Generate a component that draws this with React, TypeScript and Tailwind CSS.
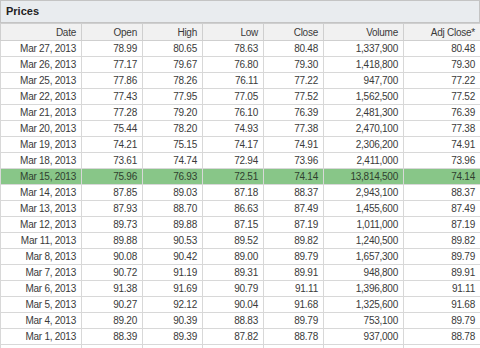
const rows: string[][] = [
  ["Mar 27, 2013", "78.99", "80.65", "78.63", "80.48", "1,337,900", "80.48"],
  ["Mar 26, 2013", "77.17", "79.67", "76.80", "79.30", "1,418,800", "79.30"],
  ["Mar 25, 2013", "77.86", "78.26", "76.11", "77.22", "947,700", "77.22"],
  ["Mar 22, 2013", "77.43", "77.95", "77.05", "77.52", "1,562,500", "77.52"],
  ["Mar 21, 2013", "77.28", "79.20", "76.10", "76.39", "2,481,300", "76.39"],
  ["Mar 20, 2013", "75.44", "78.20", "74.93", "77.38", "2,470,100", "77.38"],
  ["Mar 19, 2013", "74.21", "75.15", "74.17", "74.91", "2,306,200", "74.91"],
  ["Mar 18, 2013", "73.61", "74.74", "72.94", "73.96", "2,411,000", "73.96"],
  ["Mar 15, 2013", "75.96", "76.93", "72.51", "74.14", "13,814,500", "74.14"],
  ["Mar 14, 2013", "87.85", "89.03", "87.18", "88.37", "2,943,100", "88.37"],
  ["Mar 13, 2013", "87.93", "88.70", "86.63", "87.49", "1,455,600", "87.49"],
  ["Mar 12, 2013", "89.73", "89.88", "87.15", "87.19", "1,011,000", "87.19"],
  ["Mar 11, 2013", "89.88", "90.53", "89.52", "89.82", "1,240,500", "89.82"],
  ["Mar 8, 2013", "90.08", "90.42", "89.00", "89.79", "1,657,300", "89.79"],
  ["Mar 7, 2013", "90.72", "91.19", "89.31", "89.91", "948,800", "89.91"],
  ["Mar 6, 2013", "91.38", "91.69", "90.79", "91.11", "1,396,800", "91.11"],
  ["Mar 5, 2013", "90.27", "92.12", "90.04", "91.68", "1,325,600", "91.68"],
  ["Mar 4, 2013", "89.20", "90.39", "88.83", "89.79", "753,100", "89.79"],
  ["Mar 1, 2013", "88.39", "89.39", "87.82", "88.78", "937,000", "88.78"],
];

const headers = ["Date", "Open", "High", "Low", "Close", "Volume", "Adj Close*"];
const widths = ["w-[81px]", "w-[61px]", "w-[60px]", "w-[61px]", "w-[60px]", "w-[80px]", "w-[77px]"];

export default function App() {
  return (
    <div className="w-[480px] h-[348px] overflow-hidden bg-white font-['Liberation_Sans',Arial,sans-serif] text-[10px] tracking-[-0.25px] text-[#3a3a3a]">
      <div className="h-[23px] border border-[#c4c4c4] bg-[#e9ecef] px-[5px] flex items-center">
        <span className="font-bold text-[11px] tracking-normal text-[#222]">Prices</span>
      </div>
      <table className="w-[480px] table-fixed border-collapse">
        <thead>
          <tr className="h-[17px] bg-[#f1f1f1]">
            {headers.map((h, i) => (
              <th
                key={h}
                className={`${widths[i]} border border-[#cfcfcf] px-[5px] py-0 text-right font-normal leading-[15px]`}
              >
                {h}
              </th>
            ))}
          </tr>
        </thead>
        <tbody>
          {rows.map((r, ri) => {
            const hot = r[0] === "Mar 15, 2013";
            return (
              <tr key={ri} className={`h-[16px] ${hot ? "bg-[#88c688]" : "bg-white"}`}>
                {r.map((c, ci) => (
                  <td
                    key={ci}
                    className={`border border-[#d8d8d8] px-[5px] py-0 text-right leading-[15px] whitespace-nowrap ${
                      hot ? "text-[#2f3f2f]" : ""
                    }`}
                  >
                    {c}
                  </td>
                ))}
              </tr>
            );
          })}
          <tr className="h-[16px]">
            {headers.map((h) => (
              <td key={h} className="border border-[#d8d8d8] p-0" />
            ))}
          </tr>
        </tbody>
      </table>
    </div>
  );
}
